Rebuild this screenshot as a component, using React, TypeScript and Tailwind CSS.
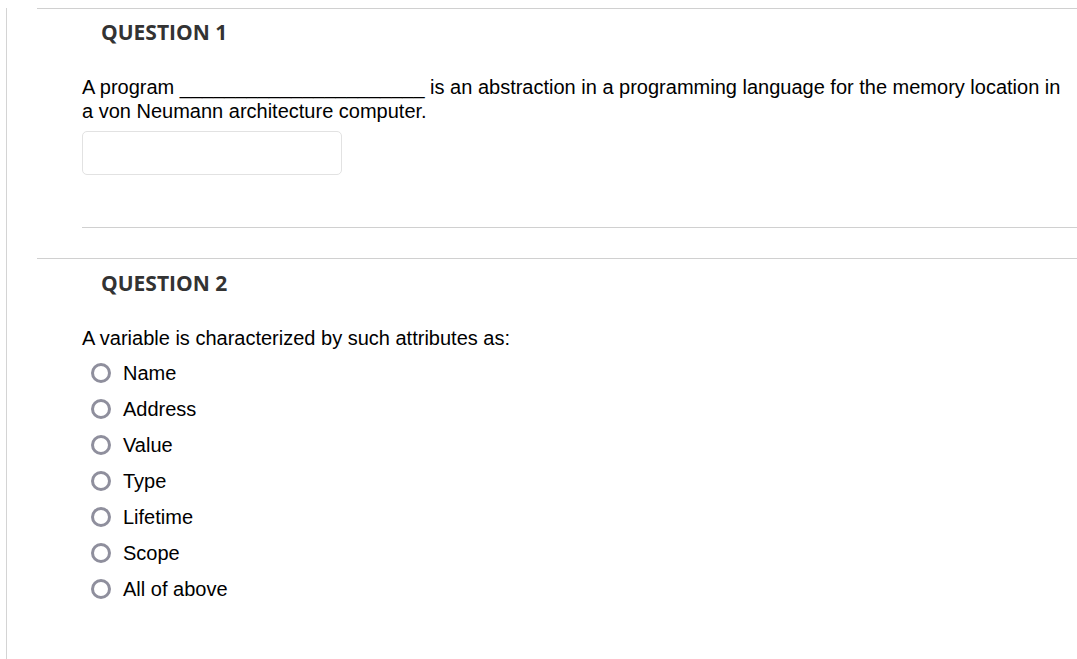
const options = ["Name", "Address", "Value", "Type", "Lifetime", "Scope", "All of above"];

const Heading = ({ children }: { children: React.ReactNode }) => (
  <h2
    className="pl-[64px] text-[21px] leading-[28px] font-bold text-[#333333]"
    style={{ fontFamily: '"Open Sans", sans-serif' }}
  >
    {children}
  </h2>
);

export default function App() {
  return (
    <div className="w-[1077px] h-[659px] bg-white overflow-hidden pl-[6px]">
      <div
        className="h-full border-l border-[#d4d4d4] pl-[30px] text-black"
        style={{ fontFamily: '"Liberation Sans", Arial, sans-serif' }}
      >
        <div className="mt-[8px] border-t border-[#d0d0d0] pt-[9px]">
          <Heading>QUESTION 1</Heading>
          <div className="pl-[45px] pr-[10px]">
            <p className="mt-[29px] text-[20px] leading-[24px]">
              A program ______________________ is an abstraction in a programming language for the memory location in
              a von Neumann architecture computer.
            </p>
            <input
              type="text"
              className="mt-[8px] block w-[260px] h-[44px] rounded-[5px] border border-[#e2e2e2] outline-none"
            />
            <div className="mt-[52px] border-t border-[#d0d0d0] -mr-[10px]"></div>
          </div>
        </div>

        <div className="mt-[30px] border-t border-[#d0d0d0] pt-[10px]">
          <Heading>QUESTION 2</Heading>
          <div className="pl-[45px]">
            <p className="mt-[29px] text-[20px] leading-[24px]">A variable is characterized by such attributes as:</p>
            <ul className="mt-[5px]">
              {options.map((o) => (
                <li key={o} className="flex items-center h-[36px] pl-[9px]">
                  <span className="w-[20px] h-[20px] rounded-full border-[3px] border-[#8f8f9d] bg-white shrink-0"></span>
                  <span className="ml-[12px] text-[20px] leading-[24px]">{o}</span>
                </li>
              ))}
            </ul>
          </div>
        </div>
      </div>
    </div>
  );
}
